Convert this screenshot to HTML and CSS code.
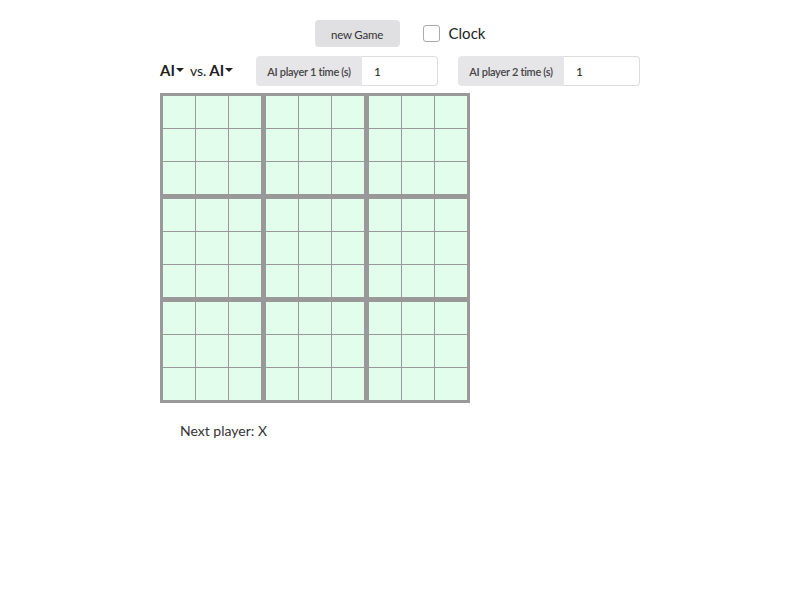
FILE: index.html
```html
<!DOCTYPE html>
<html>
<head>
<meta charset="utf-8">
<link rel="stylesheet" href="styles.css">
</head>
<body>
<div class="app">
  <div class="top-row">
    <button class="new-game">new Game</button>
    <label class="clock"><span class="checkbox"></span><span>Clock</span></label>
  </div>
  <div class="settings-row">
    <div class="players">
      <span class="player">AI<span class="caret"></span></span>
      <span class="vs">vs.</span>
      <span class="player">AI<span class="caret"></span></span>
    </div>
    <div class="time-group">
      <span class="time-label">AI player 1 time (s)</span>
      <span class="time-input">1</span>
    </div>
    <div class="time-group">
      <span class="time-label">AI player 2 time (s)</span>
      <span class="time-input">1</span>
    </div>
  </div>
  <div class="board" id="board"></div>
  <div class="status">Next player: X</div>
</div>
<script>
  var board = document.getElementById('board');
  for (var i = 0; i < 9; i++) {
    var sub = document.createElement('div');
    sub.className = 'sub';
    for (var j = 0; j < 9; j++) {
      var c = document.createElement('div');
      c.className = 'cell';
      sub.appendChild(c);
    }
    board.appendChild(sub);
  }
</script>
</body>
</html>
```

FILE: styles.css
```css
html, body {
  margin: 0;
  padding: 0;
  background: #fff;
  font-family: Lato, "Open Sans", sans-serif;
  color: #222;
}

.app {
  width: 480px;
  margin: 0 auto;
  padding-top: 20px;
}

.top-row {
  display: flex;
  justify-content: center;
  align-items: center;
  gap: 23px;
}

.new-game {
  width: 85px;
  height: 27px;
  border: none;
  border-radius: 4px;
  background: #e0e0e3;
  color: #333;
  font-family: Lato, sans-serif;
  font-size: 11.5px;
  letter-spacing: -0.2px;
  padding: 2px 0 0 0;
}

.clock {
  display: flex;
  align-items: center;
  gap: 9px;
  font-size: 15px;
  color: #222;
  margin-top: -1px;
}

.checkbox {
  width: 15px;
  height: 15px;
  border: 1px solid #aaa;
  border-radius: 3px;
  background: #fff;
}

.settings-row {
  display: flex;
  align-items: center;
  margin-top: 9px;
  height: 30px;
}

.players {
  display: flex;
  align-items: center;
  width: 96px;
  font-size: 15px;
  margin-top: -3px;
}

.player {
  font-weight: bold;
  display: flex;
  align-items: center;
}

.caret {
  width: 0;
  height: 0;
  border-left: 4px solid transparent;
  border-right: 4px solid transparent;
  border-top: 4px solid #222;
  margin-left: 1px;
  margin-top: 1px;
}

.vs {
  font-size: 14px;
  margin: 1px 3px 0 6px;
}

.time-group {
  display: flex;
  height: 30px;
  width: 182px;
  margin-right: 20px;
}

.time-group:last-child {
  margin-right: 0;
}

.time-label {
  width: 106px;
  box-sizing: border-box;
  background: #e6e6e8;
  border-radius: 4px 0 0 4px;
  font-size: 11px;
  font-weight: 600;
  color: #444;
  display: flex;
  align-items: center;
  justify-content: center;
  letter-spacing: -0.3px;
}

.time-input {
  flex: 1;
  box-sizing: border-box;
  border: 1px solid #dcdcdc;
  border-left: none;
  border-radius: 0 4px 4px 0;
  font-size: 12px;
  color: #222;
  display: flex;
  align-items: center;
  padding-left: 12px;
}

.board {
  margin-top: 7px;
  display: grid;
  grid-template-columns: repeat(3, auto);
  gap: 5px;
  padding: 3px;
  background: #999;
  width: max-content;
}

.sub {
  display: grid;
  grid-template-columns: repeat(3, 32px);
  grid-auto-rows: 32px;
  gap: 1px;
}

.cell {
  background: #e2fdec;
}

.status {
  margin-top: 19px;
  padding-left: 20px;
  font-size: 14px;
  color: #333;
}
```
